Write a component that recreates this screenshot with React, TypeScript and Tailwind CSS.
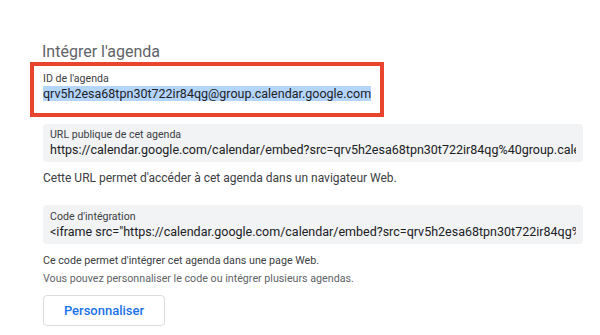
const calendarId = "qrv5h2esa68tpn30t722ir84qg@group.calendar.google.com";
const publicUrl =
  "https://calendar.google.com/calendar/embed?src=qrv5h2esa68tpn30t722ir84qg%40group.calendar.google.com&ctz=Europe%2FParis";
const embedCode =
  '<iframe src="https://calendar.google.com/calendar/embed?src=qrv5h2esa68tpn30t722ir84qg%40group.calendar.google.com&ctz=Europe%2FParis" style="border: 0" width="800" height="600" frameborder="0" scrolling="no"></iframe>';

function ReadonlyField({ label, value }: { label: string; value: string }) {
  return (
    <div className="ml-[43px] w-[540px] rounded-[4px] bg-[#f1f3f4] px-[7px] pb-[4px]">
      <div className="text-[10.6px] leading-[14px] text-[#3c4043]">{label}</div>
      <div className="overflow-hidden whitespace-nowrap text-[12.5px] leading-[16px] text-[#202124]">
        {value}
      </div>
    </div>
  );
}

export default function App() {
  return (
    <div className="h-[335px] w-[600px] overflow-hidden bg-white pt-[40px] font-['Roboto','Liberation_Sans',sans-serif]">
      <h2 className="ml-[42px] h-[22px] text-[16px] leading-[24px] text-[#5f6368]">Intégrer l'agenda</h2>

      <div className="ml-[30px] h-[55px] w-[354px] border-4 border-[#e9442e] pt-[6px] pl-[9px]">
        <div className="text-[10.6px] leading-[14px] text-[#3c4043]">ID de l'agenda</div>
        <div className="mt-[1px] text-[12.5px] leading-[14px] text-[#202124]">
          <span className="bg-[#b4d5fe]">{calendarId}</span>
        </div>
      </div>

      <div className="mt-[7px] [&>div]:pt-[4px]">
        <ReadonlyField label="URL publique de cet agenda" value={publicUrl} />
      </div>
      <p className="mt-[8px] ml-[43px] text-[12px] leading-[16px] text-[#3c4043]">
        Cette URL permet d'accéder à cet agenda dans un navigateur Web.
      </p>

      <div className="mt-[19px] [&>div]:pt-[5px]">
        <ReadonlyField label="Code d'intégration" value={embedCode} />
      </div>
      <p className="mt-[9px] ml-[43px] text-[10.7px] leading-[16px] text-[#3c4043]">
        Ce code permet d'intégrer cet agenda dans une page Web.
      </p>
      <p className="mt-[2px] ml-[43px] text-[10.7px] leading-[16px] text-[#5f6368]">
        Vous pouvez personnaliser le code ou intégrer plusieurs agendas.
      </p>

      <button
        type="button"
        className="mt-[8px] ml-[43px] flex h-[31px] w-[122px] items-center justify-center rounded-[4px] border border-[#dadce0] bg-white text-[13px] font-medium text-[#1a73e8]"
      >
        Personnaliser
      </button>
    </div>
  );
}
